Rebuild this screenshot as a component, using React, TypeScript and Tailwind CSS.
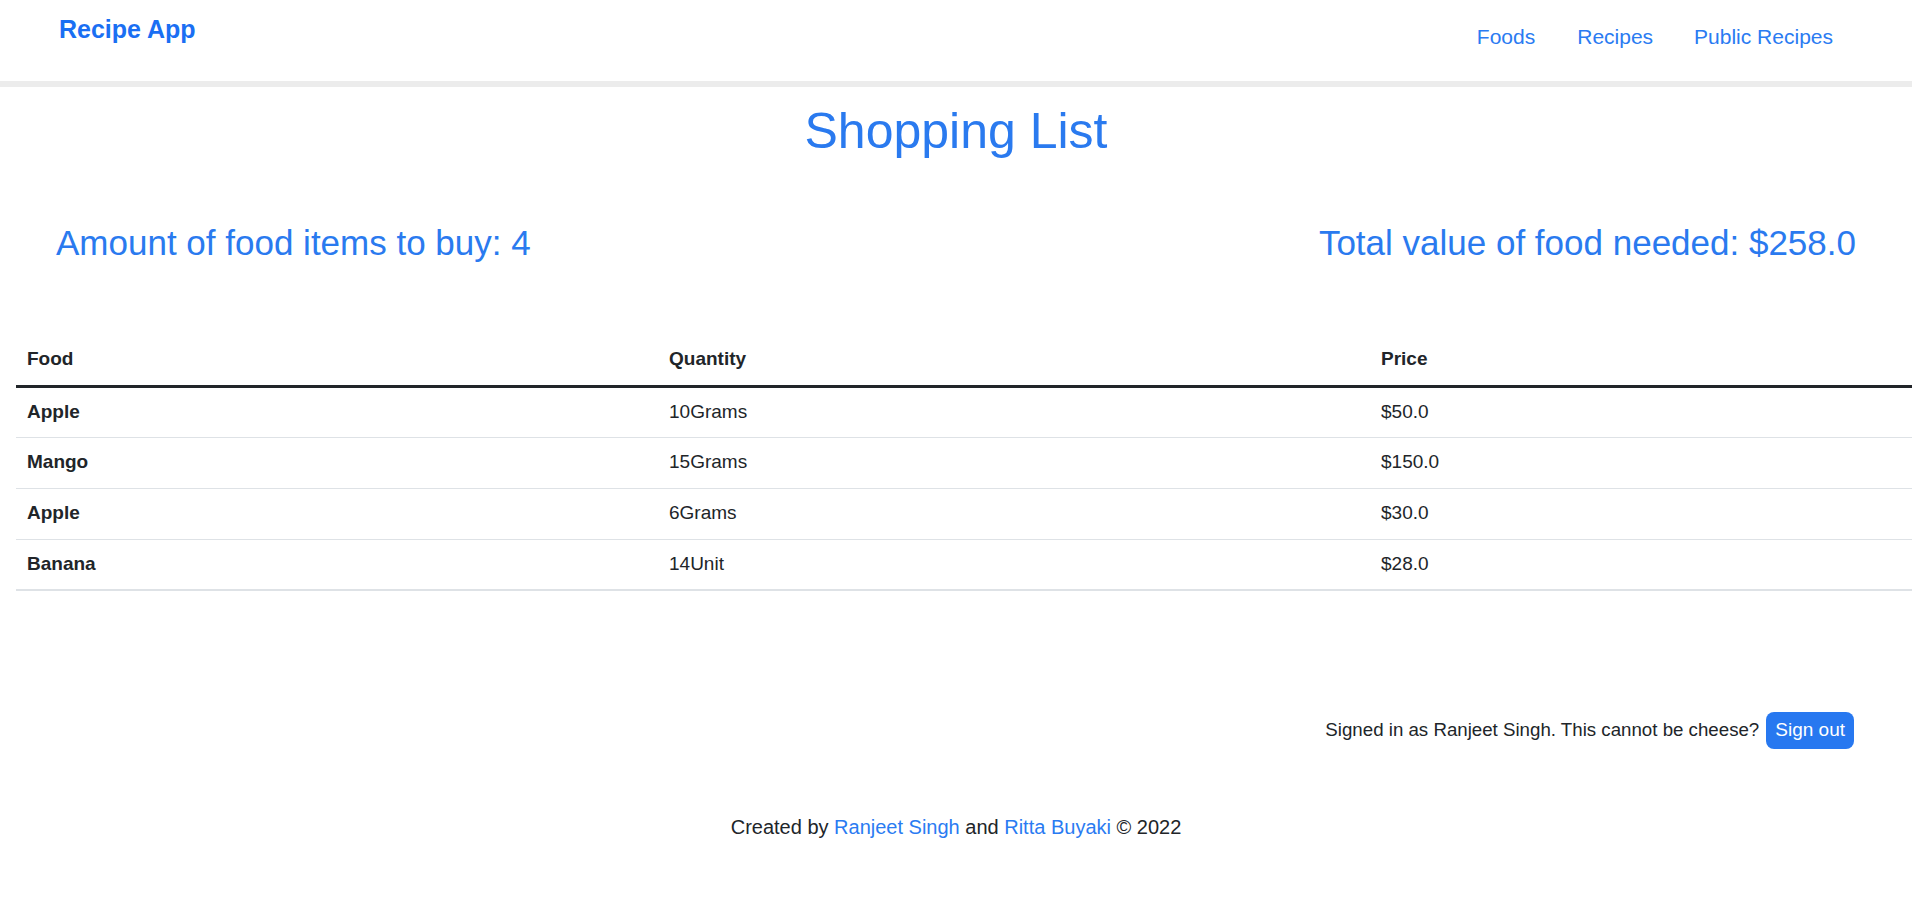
const items = [
  { food: 'Apple', quantity: '10Grams', price: '$50.0' },
  { food: 'Mango', quantity: '15Grams', price: '$150.0' },
  { food: 'Apple', quantity: '6Grams', price: '$30.0' },
  { food: 'Banana', quantity: '14Unit', price: '$28.0' },
]

function Navbar() {
  return (
    <nav className="flex justify-between border-b-[6px] border-[#ececec] h-[87px]">
      <a className="ml-[59px] mt-[11px] text-[25px] leading-[36px] font-bold text-[#1a6ff3]">Recipe App</a>
      <ul className="flex mt-[21px] mr-[79px] text-[21px] leading-[32px] text-[#2a7bf2]">
        <li><a>Foods</a></li>
        <li className="ml-[42px]"><a>Recipes</a></li>
        <li className="ml-[41px]"><a>Public Recipes</a></li>
      </ul>
    </nav>
  )
}

export default function App() {
  return (
    <div className="min-h-[906px] bg-white overflow-hidden text-[#212529]" style={{ fontFamily: '"Liberation Sans", Arial, sans-serif' }}>
      <Navbar />

      <h1 className="mt-[15px] text-center text-[50px] leading-[58px] text-[#2a7aef]">Shopping List</h1>

      <div className="flex justify-between px-[56px] mt-[62px] text-[35px] leading-[42px] text-[#2a7aef]">
        <h3>Amount of food items to buy: {items.length}</h3>
        <h3>Total value of food needed: $258.0</h3>
      </div>

      <table className="ml-[16px] mt-[69px] w-[1896px] table-fixed border-collapse text-[19px]">
        <colgroup>
          <col className="w-[642px]" />
          <col className="w-[712px]" />
          <col />
        </colgroup>
        <thead>
          <tr className="h-[53px] border-b-[3px] border-[#212529] text-left">
            <th className="px-[11px] font-bold">Food</th>
            <th className="px-[11px] font-bold">Quantity</th>
            <th className="px-[11px] font-bold">Price</th>
          </tr>
        </thead>
        <tbody>
          {items.map((item, i) => (
            <tr
              key={i}
              className={`h-[51px] border-[#dee2e6] ${i === items.length - 1 ? 'border-b-2' : 'border-b'}`}
            >
              <td className="px-[11px] font-bold">{item.food}</td>
              <td className="px-[11px]">{item.quantity}</td>
              <td className="px-[11px]">{item.price}</td>
            </tr>
          ))}
        </tbody>
      </table>

      <div className="flex justify-end items-center mt-[121px] pr-[58px] text-[18.7px]">
        <span>Signed in as Ranjeet Singh. This cannot be cheese?</span>
        <button className="ml-[7px] h-[37px] px-[9px] rounded-[8px] bg-[#2778f0] text-white text-[19px]">Sign out</button>
      </div>

      <footer className="mt-[64px] text-center text-[20px] leading-[28px]">
        Created by <a className="text-[#2a7bf2]">Ranjeet Singh</a> and <a className="text-[#2a7bf2]">Ritta Buyaki</a> © 2022
      </footer>
    </div>
  )
}
